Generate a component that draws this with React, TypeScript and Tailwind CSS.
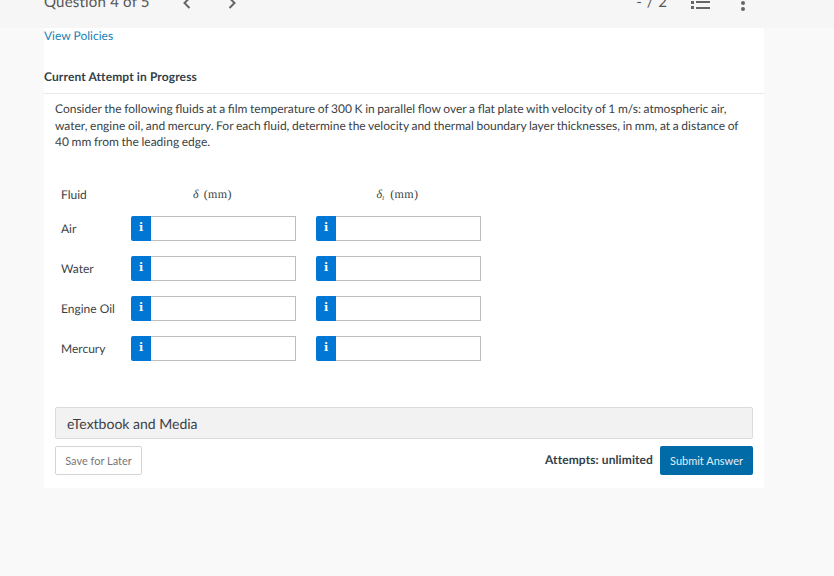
import React from 'react';

const fluids = ['Air', 'Water', 'Engine Oil', 'Mercury'];

const AnswerInput = () => (
  <div className="flex h-[25px] w-[165px]">
    <button className="flex h-full w-[20px] shrink-0 items-center justify-center rounded-l-[2px] bg-[#0077d4] font-['DejaVu_Serif',serif] text-[11px] font-bold text-white">
      i
    </button>
    <div className="h-full flex-1 border border-l-0 border-[#bdbdbd] bg-white" />
  </div>
);

const App = () => {
  return (
    <div className="h-[576px] w-[834px] overflow-hidden bg-[#f9f9f9] font-['Lato',sans-serif] text-[#3b3f45] [text-rendering:geometricPrecision]">
      <header className="flex h-[28px] items-end justify-between overflow-hidden bg-[#f6f6f6] pb-[16px] pl-[44px] pr-[88px]">
        <div className="flex items-end text-[#555]">
          <span className="text-[15px] leading-[20px] tracking-[0.2px]">Question 4 of 5</span>
          <svg className="mb-[3px] ml-[33px]" width="8" height="12" viewBox="0 0 8 12" fill="none" stroke="#666" strokeWidth="2">
            <path d="M6.5 1 L1.5 6 L6.5 11" />
          </svg>
          <svg className="mb-[3px] ml-[37px]" width="8" height="12" viewBox="0 0 8 12" fill="none" stroke="#666" strokeWidth="2">
            <path d="M1.5 1 L6.5 6 L1.5 11" />
          </svg>
        </div>
        <div className="flex items-end text-[#555]">
          <span className="text-[15px] leading-[20px] [word-spacing:1px]">- / 2</span>
          <svg className="mb-[3px] ml-[24px]" width="19" height="14" viewBox="0 0 19 14" fill="#666">
            <rect x="5" y="0" width="14" height="2" />
            <rect x="5" y="6" width="14" height="2" />
            <rect x="5" y="12" width="14" height="2" />
            <rect x="0" y="6" width="3" height="3" />
            <rect x="0" y="11" width="3" height="3" />
          </svg>
          <svg className="mb-[1px] ml-[30px]" width="6" height="16" viewBox="0 0 6 16" fill="#666">
            <circle cx="3" cy="2" r="2" />
            <circle cx="3" cy="8" r="2" />
            <circle cx="3" cy="14" r="2" />
          </svg>
        </div>
      </header>

      <main className="ml-[44px] h-[460px] w-[720px] bg-white">
        <a className="block text-[12px] leading-[15px] text-[#1a7fb5]">View Policies</a>
        <h2 className="mt-[26px] text-[12px] font-bold leading-[15px] tracking-[0.12px] text-[#333f48]">Current Attempt in Progress</h2>
        <div className="mt-[9px] border-t border-[#e8e8e8] px-[11px] pt-[7px]">
          <p className="text-[12px] leading-[16.5px] [word-spacing:-0.45px]">
            Consider the following fluids at a film temperature of 300 K in parallel flow over a flat plate with velocity of 1 m/s: atmospheric air,
            water, engine oil, and mercury. For each fluid, determine the velocity and thermal boundary layer thicknesses, in mm, at a distance of
            40 mm from the leading edge.
          </p>

          <div className="mt-[36.5px] flex pl-[6px] text-[12px]">
            <div className="h-[15px] w-[70px] leading-[15px]">Fluid</div>
            <div className="h-[15px] w-[163px] text-center font-['Liberation_Serif',serif] text-[12px] leading-[15px]">
              <i>δ</i> <span className="ml-[2px] tracking-[0.4px]">(mm)</span>
            </div>
            <div className="ml-[22px] h-[15px] w-[163px] text-center font-['Liberation_Serif',serif] text-[12px] leading-[15px]">
              <i>δ</i>
              <sub className="text-[7px]">
                <i>t</i>
              </sub>{' '}
              <span className="ml-[3px] tracking-[0.4px]">(mm)</span>
            </div>
          </div>

          <div className="mt-[14px] flex flex-col gap-[15px] pl-[6px]">
            {fluids.map((fluid) => (
              <div key={fluid} className="flex items-center text-[12px]">
                <span className="w-[70px] leading-[25px]">{fluid}</span>
                <div className="flex gap-[20px]">
                  <AnswerInput />
                  <AnswerInput />
                </div>
              </div>
            ))}
          </div>

          <div className="mt-[46px] flex h-[32px] items-center rounded-[2px] border border-[#dcdcdc] bg-[#f2f2f2] px-[11px] text-[14px]">
            eTextbook and Media
          </div>

          <div className="mt-[7px] flex items-center justify-between">
            <button className="h-[29px] w-[87px] rounded-[2px] border border-[#d5d5d5] bg-white pt-[1px] text-[11px] text-[#777]">
              Save for Later
            </button>
            <div className="flex items-center gap-[7px]">
              <span className="pb-[2px] text-[12px] font-bold tracking-[0.1px] text-[#333f48]">Attempts: unlimited</span>
              <button className="h-[29px] w-[93px] rounded-[2px] bg-[#006ba6] pt-[1px] text-[11px] text-[#e4eef5]">
                Submit Answer
              </button>
            </div>
          </div>
        </div>
      </main>
    </div>
  );
};

export default App;
